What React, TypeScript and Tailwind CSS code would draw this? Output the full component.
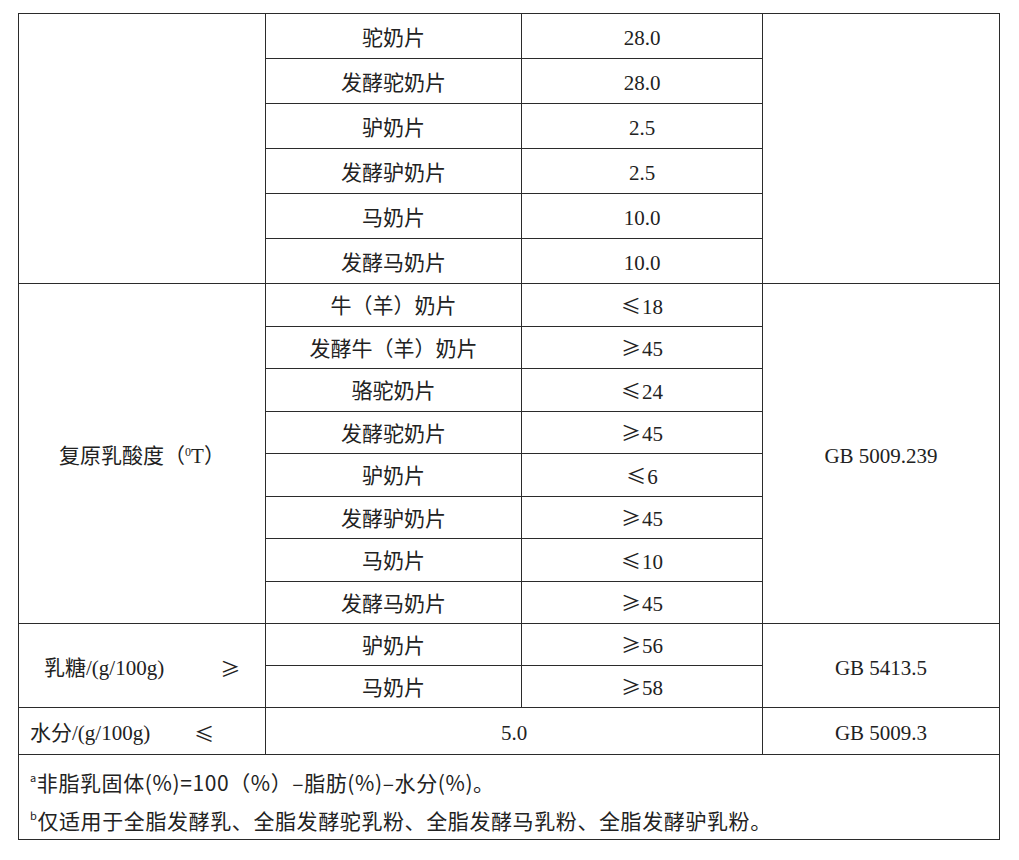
import React from 'react';

type Row = { name: string; value: string };

const camelRows: Row[] = [
  { name: '驼奶片', value: '28.0' },
  { name: '发酵驼奶片', value: '28.0' },
  { name: '驴奶片', value: '2.5' },
  { name: '发酵驴奶片', value: '2.5' },
  { name: '马奶片', value: '10.0' },
  { name: '发酵马奶片', value: '10.0' },
];

const acidRows: Row[] = [
  { name: '牛（羊）奶片', value: '≤18' },
  { name: '发酵牛（羊）奶片', value: '≥45' },
  { name: '骆驼奶片', value: '≤24' },
  { name: '发酵驼奶片', value: '≥45' },
  { name: '驴奶片', value: '≤6' },
  { name: '发酵驴奶片', value: '≥45' },
  { name: '马奶片', value: '≤10' },
  { name: '发酵马奶片', value: '≥45' },
];

const lactoseRows: Row[] = [
  { name: '驴奶片', value: '≥56' },
  { name: '马奶片', value: '≥58' },
];

// the comparison sign is drawn bigger in the scan than in the serif face
const Value = ({ v }: { v: string }) => {
  const sign = v[0] === '≤' || v[0] === '≥' ? v[0] : '';
  return (
    <>
      {sign && <span className="font-['Noto_Sans_CJK_SC',sans-serif] text-[20px] mr-[1px]">{sign}</span>}
      {sign ? v.slice(1) : v}
    </>
  );
};

const cell = 'border border-[#2b2b2b] text-center align-middle px-0 pb-0';

export default function App() {
  return (
    <div className="bg-white w-[1019px] h-[860px] overflow-hidden pt-[13px] pl-[18px] text-[#222] font-['Liberation_Serif','Noto_Sans_CJK_SC',serif] text-[21px]">
      <table className="border-collapse table-fixed w-[981px]">
        <colgroup>
          <col className="w-[247px]" />
          <col className="w-[256px]" />
          <col className="w-[241px]" />
          <col className="w-[237px]" />
        </colgroup>
        <tbody>
          {camelRows.map((r, i) => (
            <tr key={'c' + i} className="h-[45px]">
              {i === 0 && <td rowSpan={6} className={cell} />}
              <td className={cell + ' pt-[6px]'}>{r.name}</td>
              <td className={cell + ' pt-[6px]'}>{r.value}</td>
              {i === 0 && <td rowSpan={6} className={cell} />}
            </tr>
          ))}
          {acidRows.map((r, i) => (
            <tr key={'a' + i} className="h-[42.5px]">
              {i === 0 && (
                <td rowSpan={8} className={cell + ' pt-[6px]'}>
                  复原乳酸度（<span className="text-[12px] align-[7px] leading-[0]">0</span>T）
                </td>
              )}
              <td className={cell + ' pt-[4px]'}>{r.name}</td>
              <td className={cell + ' pt-[4px]'}><Value v={r.value} /></td>
              {i === 0 && (
                <td rowSpan={8} className={cell + ' pt-[6px]'}>GB 5009.239</td>
              )}
            </tr>
          ))}
          {lactoseRows.map((r, i) => (
            <tr key={'l' + i} className="h-[42px]">
              {i === 0 && (
                <td rowSpan={2} className={cell + ' pt-[6px]'}>
                  <div className="flex items-center pl-[25px] gap-[56px]">
                    <span>乳糖/(g/100g)</span>
                    <span className="font-['Noto_Sans_CJK_SC',sans-serif] text-[20px]">≥</span>
                  </div>
                </td>
              )}
              <td className={cell + ' pt-[4px]'}>{r.name}</td>
              <td className={cell + ' pt-[4px]'}><Value v={r.value} /></td>
              {i === 0 && (
                <td rowSpan={2} className={cell + ' pt-[6px]'}>GB 5413.5</td>
              )}
            </tr>
          ))}
          <tr className="h-[47px]">
            <td className={cell + ' pt-[6px]'}>
              <div className="flex items-center pl-[11px] gap-[44px]">
                <span>水分/(g/100g)</span>
                <span className="font-['Noto_Sans_CJK_SC',sans-serif] text-[20px]">≤</span>
              </div>
            </td>
            <td colSpan={2} className={cell + ' pt-[6px]'}>5.0</td>
            <td className={cell + ' pt-[6px]'}>GB 5009.3</td>
          </tr>
          <tr>
            <td colSpan={4} className="border border-[#2b2b2b] text-left align-top p-0">
              <div className="h-[84px] overflow-hidden flex flex-col pl-[11px] pt-[9px] gap-[2px] font-['Noto_Sans_CJK_SC',sans-serif] text-[21px] leading-[36px] tracking-[0.6px]">
                <div>
                  <span className="text-[11px] align-[9px] leading-[0]">a</span>非脂乳固体(%)=100（%）–脂肪(%)–水分(%)。
                </div>
                <div>
                  <span className="text-[11px] align-[9px] leading-[0]">b</span>仅适用于全脂发酵乳、全脂发酵驼乳粉、全脂发酵马乳粉、全脂发酵驴乳粉。
                </div>
              </div>
            </td>
          </tr>
        </tbody>
      </table>
    </div>
  );
}
